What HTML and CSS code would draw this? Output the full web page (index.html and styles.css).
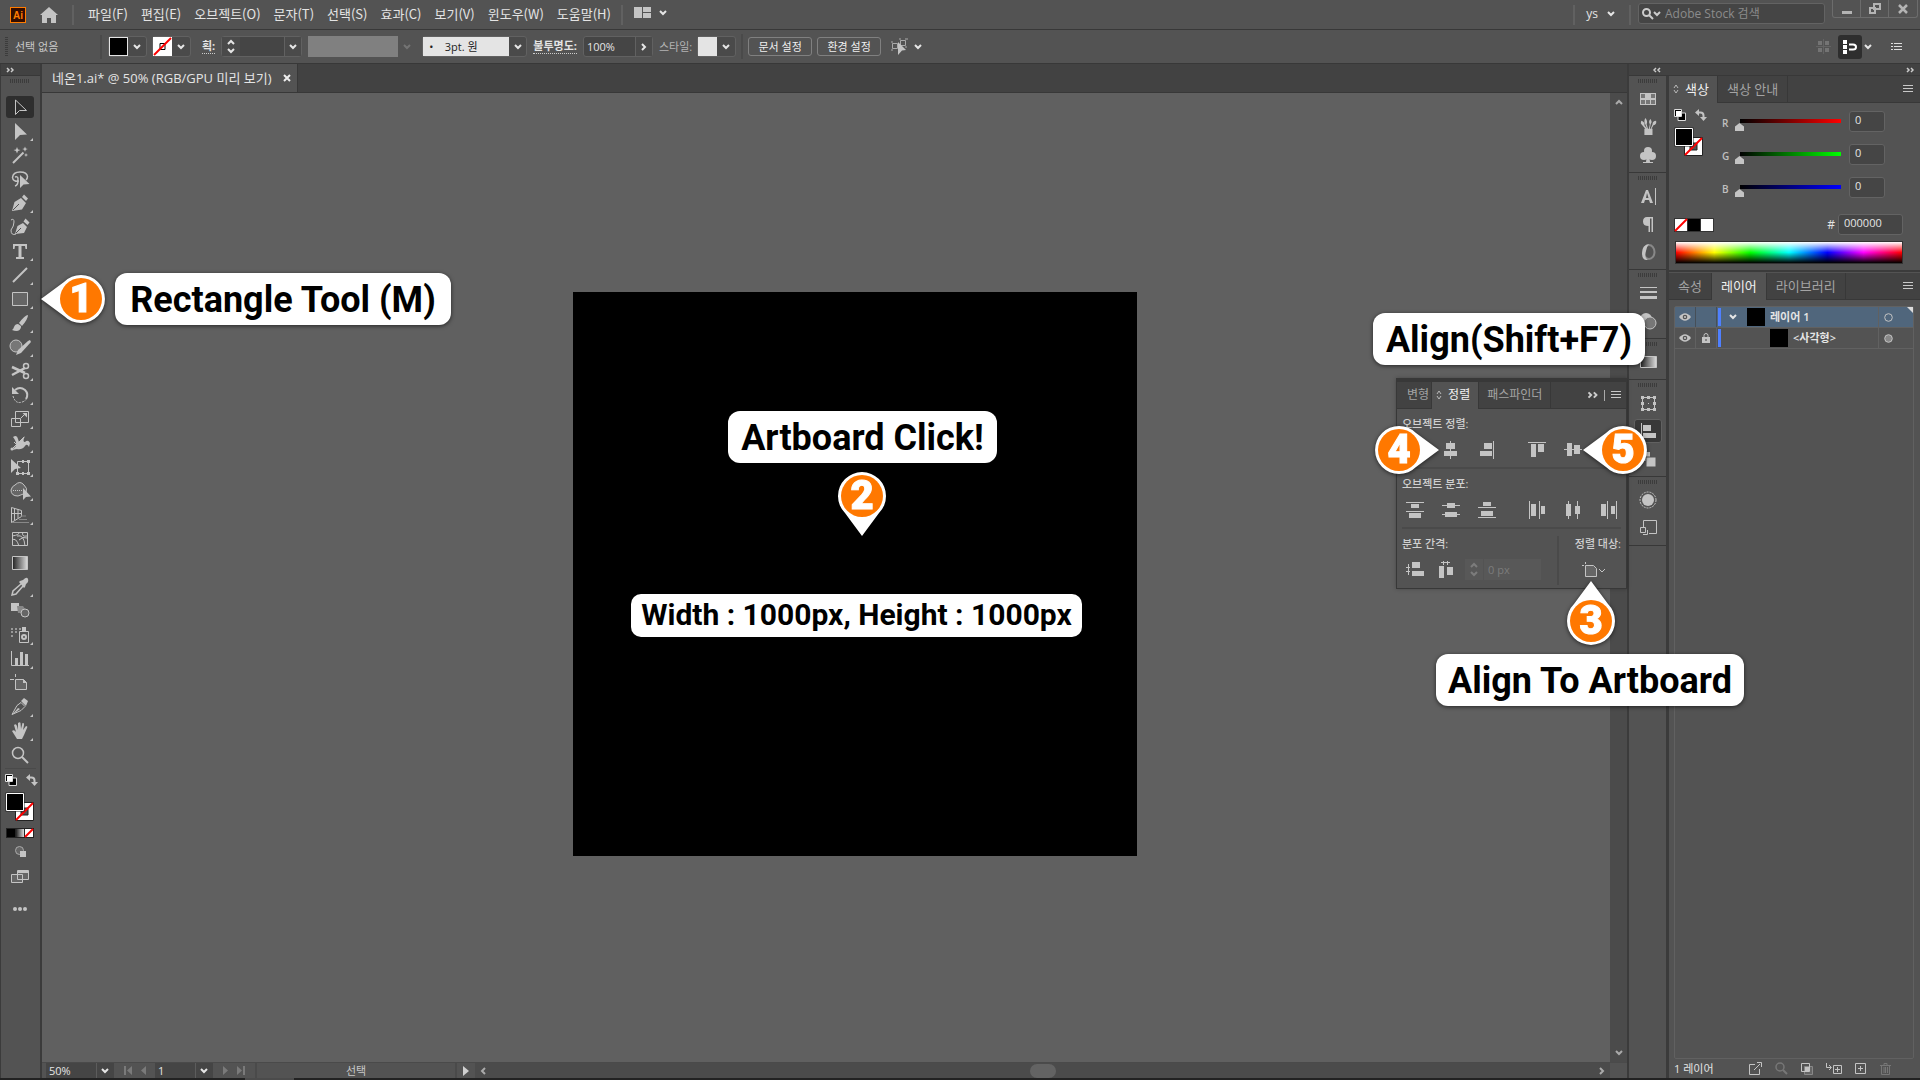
FILE: index.html
```html
<!DOCTYPE html>
<html lang="ko">
<head>
<meta charset="utf-8">
<title>네온1.ai</title>
<link rel="stylesheet" href="styles.css">
</head>
<body>
<svg class="sprite" aria-hidden="true">
  <symbol id="chev" viewBox="0 0 8 6"><path d="M1 1l3 3 3-3" fill="none" stroke="currentColor" stroke-width="2"/></symbol>
  <symbol id="menu" viewBox="0 0 10 8"><path d="M0 .5h10M0 3.5h10M0 6.5h10" stroke="currentColor"/></symbol>
  <symbol id="sort" viewBox="0 0 6 10"><path d="M1 4l2-3 2 3M1 6l2 3 2-3" fill="none" stroke="currentColor"/></symbol>
  <symbol id="dbl" viewBox="0 0 8 6"><path d="M1 1l2 2-2 2M5 1l2 2-2 2" fill="none" stroke="currentColor" stroke-width="1.5"/></symbol>
  <symbol id="default" viewBox="0 0 12 12"><path d="M4 4h7.500v7.500H4z" fill="#000" stroke="#ddd"/><path d="M.5.5h7v7h-7z" fill="#000" stroke="#ddd"/><path d="M2 2h5v5H2z" fill="#fff"/></symbol>
  <symbol id="swap" viewBox="0 0 12 12"><path d="M3 3.500h2.500q3 0 3 3V9" fill="none" stroke="#c4c4c4" stroke-width="2"/><path d="M0 3.500L4 0v7zM5 8h7l-3.500 4z" fill="#c4c4c4"/></symbol>
  <symbol id="fillstroke" viewBox="0 0 30 30"><path d="M10.500 10.500h18v18h-18z" fill="#fff" stroke="#222"/><path d="M16 16h7v7h-7z" fill="#535353" stroke="#222"/><path d="M11 28L28 11" stroke="#f00" stroke-width="2"/><path d="M.5.5h19v19H.5z" fill="#222"/><path d="M1.500 1.500h17v17h-17z" fill="#000" stroke="#fff"/></symbol>
  <symbol id="eye" viewBox="0 0 12 8"><path d="M0 4q6-7.500 12 0-6 7.500-12 0z" fill="#c4c4c4"/><circle cx="6" cy="4" r="2.300" fill="#535353"/><circle cx="6" cy="4" r="1.100" fill="#c4c4c4"/></symbol>
  <symbol id="pin" viewBox="-48 -48 96 96"><path d="M-40 0L-17-17A24 24 0 1 1-17 17z" fill="#fff"/><circle r="21" fill="#ff7800"/></symbol>
  <linearGradient id="ramp"><stop stop-color="#222"/><stop offset="1" stop-color="#ddd"/></linearGradient>
</svg>

<div class="app">
  <header class="menubar">
    <svg class="ai" viewBox="0 0 16 16"><rect x=".5" y=".5" width="15" height="15" fill="#330d00" stroke="#ff7c00"/><text x="8" y="12" text-anchor="middle" fill="#ff7c00">Ai</text></svg>
    <svg class="home" viewBox="0 0 18 16"><path d="M9 0l9 8h-2v8h-5v-5H7v5H2V8H0z" fill="#c4c4c4"/></svg>
    <nav class="menus">
      <a href="#">파일(F)</a><a href="#">편집(E)</a><a href="#">오브젝트(O)</a><a href="#">문자(T)</a><a href="#">선택(S)</a><a href="#">효과(C)</a><a href="#">보기(V)</a><a href="#">윈도우(W)</a><a href="#">도움말(H)</a>
    </nav>
    <button class="arrange" aria-label="문서 정돈"><svg width="17" height="11" viewBox="0 0 17 11"><path d="M0 0h8v11H0zM9 0h8v5H9zM9 6h8v5H9z" fill="#c4c4c4"/></svg><svg class="chev"><use href="#chev"/></svg></button>
    <button class="user">ys<svg class="chev"><use href="#chev"/></svg></button>
    <label class="search"><svg width="19" height="12" viewBox="0 0 19 12"><circle cx="4.500" cy="4.500" r="3.500" fill="none" stroke="#ccc" stroke-width="2"/><path d="M7 7l4 4M12 4l3 3 3-3" fill="none" stroke="#ccc" stroke-width="2"/></svg><input type="text" placeholder="Adobe Stock 검색" aria-label="Adobe Stock 검색"></label>
    <div class="win">
      <button aria-label="최소화"><svg width="12" height="12" viewBox="0 0 12 12"><path d="M1 8h10v3H1z" fill="#b4b4b4"/></svg></button>
      <button aria-label="복원"><svg width="12" height="12" viewBox="0 0 12 12"><path d="M5 1h6v5H5zM1 5h5v5H1z" fill="#535353" stroke="#b4b4b4" stroke-width="2"/></svg></button>
      <button aria-label="닫기"><svg width="12" height="12" viewBox="0 0 12 12"><path d="M2 2l8 8M10 2l-8 8" stroke="#b4b4b4" stroke-width="2.500"/></svg></button>
    </div>
  </header>

  <div class="controls">
    <i class="vgrip"></i>
    <span class="selection">선택 없음</span>
    <button class="swatch-btn" aria-label="칠"><i class="sw black"></i><svg class="chev"><use href="#chev"/></svg></button>
    <button class="swatch-btn" aria-label="획 색상"><svg class="sw" viewBox="0 0 19 19"><path d="M0 0h19v19H0z" fill="#fff"/><path d="M7 6.500h5v6H7z" fill="none" stroke="#000"/><path d="M1 18L18 1" stroke="#f00" stroke-width="2"/></svg><svg class="chev"><use href="#chev"/></svg></button>
    <label class="strong dotted" for="sw">획:</label>
    <span class="combo stroke-w"><button class="step" aria-label="증감"><svg class="chev flip"><use href="#chev"/></svg><svg class="chev"><use href="#chev"/></svg></button><input id="sw" type="text"><button class="drop" aria-label="획 두께 목록"><svg class="chev"><use href="#chev"/></svg></button></span>
    <span class="profile"><i></i><svg class="chev"><use href="#chev"/></svg></span>
    <span class="combo brush"><select aria-label="브러쉬"><option>•&nbsp;&nbsp;&nbsp;&nbsp;3pt. 원</option></select><svg class="chev"><use href="#chev"/></svg></span>
    <label class="strong dotted" for="op">불투명도:</label>
    <span class="combo opacity"><input id="op" type="text" value="100%"><button class="drop" aria-label="불투명도"><svg class="chev right"><use href="#chev"/></svg></button></span>
    <span class="dim">스타일:</span>
    <button class="swatch-btn" aria-label="스타일"><i class="sw light"></i><svg class="chev"><use href="#chev"/></svg></button>
    <i class="rule"></i>
    <button class="outline">문서 설정</button>
    <button class="outline">환경 설정</button>
    <button class="similar" aria-label="유사 오브젝트 선택"><svg width="17" height="17" viewBox="0 0 17 17"><path d="M1.500 5.500h5v5h-5zM9.500 2.500h5v5h-5zM0 4h2M0 12h2M8 1h2M14 1h3M14 9h2" fill="none" stroke="#aaa"/><path d="M7 4l8 8-4 .5L7 17z" fill="#c4c4c4"/></svg><svg class="chev"><use href="#chev"/></svg></button>
    <div class="snap">
      <svg width="15" height="15" viewBox="0 0 15 15"><path d="M7 0h1v15H7zM0 7h15v1H0z" fill="#646464"/><path d="M2 2h4v4H2zM9 2h4v4H9zM2 9h4v4H2zM9 9h4v4H9z" fill="#747474"/></svg>
      <button class="snap-on" aria-label="스냅"><svg width="16" height="14" viewBox="0 0 16 14"><path d="M1 0h4v4H1zM1 5h4v4H1zM1 10h4v4H1z" fill="#fff"/><path d="M7 4.500h4q3 0 3 2.500t-3 2.500H7" fill="none" stroke="#fff" stroke-width="2"/></svg></button>
      <svg class="chev"><use href="#chev"/></svg>
      <svg class="list-ico" width="11" height="9" viewBox="0 0 11 9"><path d="M0 1.500h2M3 1.500h8M0 4.500h2M3 4.500h8M0 7.500h2M3 7.500h8" stroke="#ddd"/></svg>
    </div>
  </div>

  <main class="work">
    <aside class="tools">
      <div class="strip"><svg class="dbl"><use href="#dbl"/></svg></div>
      <i class="grip"></i>
      <div class="toolset">
        <button class="on" aria-label="선택"><svg viewBox="0 0 28 22"><path class="l" d="M9.500 4v14.500l4-4h7z"/></svg></button>
        <button class="more" aria-label="직접 선택"><svg viewBox="0 0 28 22"><path class="f" d="M9 3v17l5-5 7-.5z"/></svg></button>
        <button aria-label="자동 선택"><svg viewBox="0 0 28 22"><path d="M7 19L17.500 8.500" class="w"/><path class="f" d="M11 3l1 2.500L14.500 6 12 7l-1 2.500L10 7 7.500 6 10 5.500zM19 2.500l.8 2 2 .5-2 .8-.8 2-.8-2-2-.8 2-.5zM20 9l.6 1.500 1.500.5-1.500.6-.6 1.500-.6-1.500L18 11l1.400-.5z"/></svg></button>
        <button aria-label="올가미"><svg viewBox="0 0 28 22"><path class="w thin" d="M13 13q-6 1-6.500-3.500Q7 4 14 4t7.500 4.500q0 2-1.500 3.500M9 9q3-1 3 2t-3 2M12 13q0 4-3 5"/><path class="f" d="M14 7v13l3.500-3.500 6-.5z"/></svg></button>
        <button class="more" aria-label="펜"><svg viewBox="0 0 28 22"><path class="f" d="M6 19l2.500-9L15 6l5 5-4 6.500zM16 5l2-2.500 4 4L20 9z"/><path d="M7 18l6-6" stroke="#535353"/></svg></button>
        <button aria-label="곡률"><svg viewBox="0 0 28 22"><path class="f" d="M9 18l2.500-8L17 7l4 4-3 6zM17.500 5.500l2-3 4 4L21.500 9z"/><path class="l" d="M5 4q3-2 3 2t-3 8q0 6 5 4"/><path d="M10 17l5-5" stroke="#535353"/></svg></button>
        <button class="more" aria-label="문자"><svg viewBox="0 0 28 22"><path class="f" d="M7 4h14v5h-1.500L19 6h-3.500v11H18v2h-8v-2h2.500V6H9l-.5 3H7z"/></svg></button>
        <button class="more" aria-label="선분"><svg viewBox="0 0 28 22"><path class="w" d="M7 18L21 4"/></svg></button>
        <button class="more" aria-label="사각형"><svg viewBox="0 0 28 22"><path d="M6.500 4.500h15v13h-15z" fill="#666" class="s"/></svg></button>
        <button class="more" aria-label="브러쉬"><svg viewBox="0 0 28 22"><path class="f" d="M22 3q-3 0-9 8l3 3q6-7 6-11zM12 12q-3 0-4 3-1 3-2 3 5 2 7.500 0 2-2 1.500-4z"/></svg></button>
        <button class="more" aria-label="모양"><svg viewBox="0 0 28 22"><circle cx="10" cy="10" r="6" fill="#777" class="s"/><path class="f" d="M24 4l1 2L15 17l-5 2 2-5L22 5z"/></svg></button>
        <button class="more" aria-label="가위"><svg viewBox="0 0 28 22"><path d="M6 7l13 6M6 15l13-7" class="t"/><circle cx="20" cy="6" r="2.500" class="w thin"/><circle cx="20" cy="16" r="2.500" class="w thin"/></svg></button>
        <button class="more" aria-label="회전"><svg viewBox="0 0 28 22"><path class="w" d="M9 6q5-4 10 0 4 4 1 9"/><path class="f" d="M6 3v7h7z"/><path class="l" stroke-dasharray="2 1" d="M7 12q2 7 7 6.500 4-.5 6-3"/></svg></button>
        <button class="more" aria-label="크기 조절"><svg viewBox="0 0 28 22"><path class="l" d="M9.500 3.500h13v11h-13zM5.500 10.500h9v8h-9zM15 10l5-5"/><path class="f" d="M16.500 5H21v4.500z"/></svg></button>
        <button class="more" aria-label="폭"><svg viewBox="0 0 28 22"><path class="f" d="M7 5q4-3 5 2l1 3 6-6q-3 6 0 6 3-3 5 1l-1 4q-2-4-4-1-3 4-8 3l-5 1 4-4q1-4-3-9z"/><path class="l" d="M6 17L18 5M8 10l6 6"/><circle class="f" cx="6" cy="17" r="1.500"/></svg></button>
        <button class="more" aria-label="자유 변형"><svg viewBox="0 0 28 22"><path class="l" d="M11.500 5.500h11v12h-11z"/><path class="f" d="M5 3v14l4-4 6-1zM21 4h3v3h-3zM21 16h3v3h-3zM10 16h3v3h-3zM16 4h2v3h-2zM16 16h2v3h-2z"/></svg></button>
        <button class="more" aria-label="도형 구성"><svg viewBox="0 0 28 22"><path d="M9 5q5-5 9 0 4 3 2 8l-8 3Q5 16 5 10q1-4 4-5z" fill="#666" class="s"/><path class="l" stroke-dasharray="1 1" d="M7 10.500h10"/><path class="f" d="M17 8v12l3-3 5-.5z"/></svg></button>
        <button class="more" aria-label="원근감"><svg viewBox="0 0 28 22"><path class="l" d="M5.500 3.500v15l10-6V6.500zM8.500 4v12M12 5v9M5 9.500h10"/><path d="M15 12h5M13 15.500h8M6 18.500h17" stroke="#888"/></svg></button>
        <button aria-label="망"><svg viewBox="0 0 28 22"><path class="l" d="M6.500 4.500h15v13h-15zM6 8q8-1 7-4M13 18Q10 9 6 12M21 8q-6 1-4-4M11 8q7-2 8 10M13 12q4-4 8-2"/></svg></button>
        <button aria-label="그라디언트"><svg viewBox="0 0 28 22"><path d="M6.500 4.500h15v13h-15z" fill="url(#ramp)" class="s"/></svg></button>
        <button class="more" aria-label="스포이드"><svg viewBox="0 0 28 22"><path class="w thin" d="M15 8l-8 7-1 4 4-1 7-8"/><path class="f" d="M14 5l3-1q4-4 5-1t-2 5l-1 3-1 1-5-6z"/></svg></button>
        <button aria-label="블렌드"><svg viewBox="0 0 28 22"><path class="f" d="M5 3h8v8H5z"/><path d="M11 6h6l2 3v4h-7z" fill="#888"/><circle cx="19" cy="13" r="4" fill="#666" class="s"/></svg></button>
        <button class="more" aria-label="심볼 분무기"><svg viewBox="0 0 28 22"><path d="M5 5h2M9 5h2M13 5h2M5 8h2M9 8h2M5 12h2" stroke="#999" stroke-width="2"/><path class="l" d="M13.500 7.500h9v11h-9z"/><path class="f" d="M16 3h4v4h-4z"/><circle class="w" cx="18" cy="13" r="2"/></svg></button>
        <button class="more" aria-label="그래프"><svg viewBox="0 0 28 22"><path class="l" d="M5.500 3v14.500H23"/><path class="f" d="M9 10h3v7H9zM14 4h3v13h-3zM19 6h3v11h-3z"/></svg></button>
        <button aria-label="대지"><svg viewBox="0 0 28 22"><path d="M9.500 7.500h8l3 3v7h-11z" fill="#666" class="s"/><path class="l" d="M9.500 2v3M4 7.500h4"/><path class="f" d="M17 7l4 4h-4z"/></svg></button>
        <button class="more" aria-label="분할"><svg viewBox="0 0 28 22"><path class="l" d="M6 18.500l5-9 4-3 4 4-4 4z"/><path class="f" d="M15 5l3-3 4 3-2 5zM6 19l8-6-2-1z"/></svg></button>
        <button class="more" aria-label="손"><svg viewBox="0 0 28 22"><path class="f" d="M11 19l-5-8q2-2 4 1L8 5q2-2 3 1l1 4V3q2-1.500 2.500 0l.5 6 1.500-6q2-.5 1.500 2l-1 5 3-4q2 0 1 2l-3 7-2 4z"/></svg></button>
        <button aria-label="돋보기"><svg viewBox="0 0 28 22"><circle class="w thin" cx="12" cy="9" r="5.500"/><path d="M16 13l6 6" class="w"/></svg></button>
      </div>
      <div class="tool-colors">
        <div class="row"><svg width="12" height="12"><use href="#default"/></svg><svg width="12" height="12"><use href="#swap"/></svg></div>
        <svg width="30" height="30"><use href="#fillstroke"/></svg>
        <svg class="modes" width="28" height="10" viewBox="0 0 28 10"><path d="M0 0h28v10H0z" fill="#222"/><path d="M1 1h8v8H1z"/><path d="M10 1h8v8h-8z" fill="url(#ramp)"/><path d="M19 1h8v8h-8z" fill="#fff"/><path d="M19 9l8-8" stroke="#f00" stroke-width="2"/></svg>
      </div>
      <div class="tool-end">
        <svg width="11" height="11" viewBox="0 0 11 11"><circle cx="4.500" cy="4.500" r="4" fill="#666" stroke="#aaa"/><path d="M5 5h6v6H5z" fill="#c4c4c4"/></svg>
        <svg width="18" height="13" viewBox="0 0 18 13"><path d="M.5 4.500h11v8H.5zM6.500.5h11v9h-11z" fill="#666" stroke="#c4c4c4"/><path d="M6 1h12v2H6z" fill="#c4c4c4"/></svg>
        <svg width="14" height="4" viewBox="0 0 14 4"><circle cx="2" cy="2" r="2" fill="#c4c4c4"/><circle cx="7" cy="2" r="2" fill="#c4c4c4"/><circle cx="12" cy="2" r="2" fill="#c4c4c4"/></svg>
      </div>
    </aside>

    <section class="doc">
      <div class="doctabs"><div class="doctab"><span>네온1.ai* @ 50% (RGB/GPU 미리 보기)</span><button aria-label="닫기"><svg width="6" height="6" viewBox="0 0 6 6"><path d="M0 0l6 6M6 0L0 6" stroke="#eee" stroke-width="2"/></svg></button></div></div>
      <div class="stage">
        <div class="canvas"></div>
        <div class="vscroll"><svg class="chev flip"><use href="#chev"/></svg><svg class="chev"><use href="#chev"/></svg></div>

        <div class="artboard">
          <p class="note click">Artboard Click!</p>
          <div class="pin down p2"><svg><use href="#pin"/></svg><b>2</b></div>
          <p class="note small size">Width : 1000px, Height : 1000px</p>
        </div>

        <section class="align">
          <div class="tabs">
            <button class="clip">변형</button>
            <button class="on"><svg class="sort"><use href="#sort"/></svg>정렬</button>
            <button>패스파인더</button>
            <span class="tabs-end"><svg width="11" height="8" viewBox="0 0 8 6"><use href="#dbl"/></svg><i></i><svg class="menu"><use href="#menu"/></svg></span>
          </div>
          <div class="group">
            <h3>오브젝트 정렬:</h3>
            <div class="six">
              <button aria-label="왼쪽 정렬"><svg viewBox="0 0 18 18"><path d="M2 0h1v18H2zM4 3h8v5H4zM4 10h12v5H4z"/></svg></button>
              <button aria-label="가로 가운데 정렬"><svg viewBox="0 0 18 18"><path d="M8 0h1v18H8zM4 2h9v6H4zM2 10h13v5H2z"/></svg></button>
              <button aria-label="오른쪽 정렬"><svg viewBox="0 0 18 18"><path d="M15 0h1v18h-1zM6 2h8v6H6zM2 10h12v5H2z"/></svg></button>
              <button aria-label="위쪽 정렬"><svg viewBox="0 0 18 18"><path d="M0 1h18v1H0zM3 3h5v13H3zM10 3h6v8h-6z"/></svg></button>
              <button aria-label="세로 가운데 정렬"><svg viewBox="0 0 18 18"><path d="M0 8h18v1H0zM3 2h5v13H3zM10 4h6v9h-6z"/></svg></button>
              <button aria-label="아래쪽 정렬"><svg viewBox="0 0 18 18"><path d="M0 16h18v1H0zM3 2h5v13H3zM10 7h6v8h-6z"/></svg></button>
            </div>
          </div>
          <div class="group">
            <h3>오브젝트 분포:</h3>
            <div class="six">
              <button aria-label="위쪽 분포"><svg viewBox="0 0 18 18"><path d="M0 1h18v1H0zM5 3h8v4H5zM0 10h18v1H0zM3 12h12v5H3z"/></svg></button>
              <button aria-label="세로 분포"><svg viewBox="0 0 18 18"><path d="M0 4h18v1H0zM5 2h8v5H5zM0 13h18v1H0zM3 11h12v5H3z"/></svg></button>
              <button aria-label="아래쪽 분포"><svg viewBox="0 0 18 18"><path d="M5 1h8v4H5zM0 6h18v1H0zM3 10h12v5H3zM0 16h18v1H0z"/></svg></button>
              <button aria-label="왼쪽 분포"><svg viewBox="0 0 18 18"><path d="M1 0h1v18H1zM3 3h5v12H3zM11 0h1v18h-1zM13 5h4v8h-4z"/></svg></button>
              <button aria-label="가로 분포"><svg viewBox="0 0 18 18"><path d="M4 0h1v18H4zM2 3h5v12H2zM13 0h1v18h-1zM11 5h5v8h-5z"/></svg></button>
              <button aria-label="오른쪽 분포"><svg viewBox="0 0 18 18"><path d="M1 3h5v12H1zM7 0h1v18H7zM11 5h4v8h-4zM16 0h1v18h-1z"/></svg></button>
            </div>
          </div>
          <div class="last">
            <div class="spacing">
              <h3>분포 간격:</h3>
              <div class="spacing-row">
                <button aria-label="세로 간격"><svg viewBox="0 0 18 18"><path d="M6 1h8v6H6zM6 10h12v5H6zM0 6h4v1H0zM0 10h4v1H0zM2 3h1v11H2z"/></svg></button>
                <button aria-label="가로 간격"><svg viewBox="0 0 18 18"><path d="M2 5h5v12H2zM10 6h6v8h-6zM4 1h9v1H4zM6 0h1v4H6zM10 0h1v4h-1z"/></svg></button>
                <span class="px"><span class="step"><svg class="chev flip"><use href="#chev"/></svg><svg class="chev"><use href="#chev"/></svg></span><input type="text" value="0 px" aria-label="간격" disabled></span>
              </div>
            </div>
            <div class="target">
              <h3>정렬 대상:</h3>
              <button aria-label="대지에 정렬"><svg width="24" height="16" viewBox="0 0 24 16"><path d="M3.500 3.500h8l3 3v8h-11z" fill="#666" stroke="#c4c4c4"/><path d="M3.500 0v2M0 3.500h2M17 7l3 3 3-3" fill="none" stroke="#c4c4c4"/></svg></button>
            </div>
          </div>
        </section>

        <p class="note rect">Rectangle Tool (M)</p>
        <div class="pin p1"><svg><use href="#pin"/></svg><b>1</b></div>
        <p class="note shift">Align(Shift+F7)</p>
        <div class="pin east p4"><svg><use href="#pin"/></svg><b>4</b></div>
        <div class="pin p5"><svg><use href="#pin"/></svg><b>5</b></div>
        <div class="pin north p3"><svg><use href="#pin"/></svg><b>3</b></div>
        <p class="note toart">Align To Artboard</p>
      </div>
      <footer class="status">
        <span class="sel zoom"><select aria-label="확대/축소"><option>50%</option></select><svg class="chev"><use href="#chev"/></svg></span>
        <span class="nav"><svg width="8" height="9" viewBox="0 0 8 9"><path d="M0 0h2v9H0zM8 0v9L3 4.500z"/></svg><svg width="5" height="9" viewBox="0 0 5 9"><path d="M5 0v9L0 4.500z"/></svg></span>
        <span class="sel board"><select aria-label="대지"><option>1</option></select><svg class="chev"><use href="#chev"/></svg></span>
        <span class="nav"><svg width="5" height="9" viewBox="0 0 5 9"><path d="M0 0v9l5-4.500z"/></svg><svg width="8" height="9" viewBox="0 0 8 9"><path d="M6 0h2v9H6zM0 0v9l5-4.500z"/></svg></span>
        <span class="mode">선택</span>
        <button class="play" aria-label="상태 표시"><svg width="6" height="10" viewBox="0 0 6 10"><path d="M0 0v10l6-5z" fill="#d0d0d0"/></svg></button>
        <div class="hscroll"><svg class="chev left"><use href="#chev"/></svg><i></i><svg class="chev right"><use href="#chev"/></svg></div>
        <span class="corner"></span>
      </footer>
    </section>

    <aside class="side">
      <div class="strip"><svg class="dbl flip"><use href="#dbl"/></svg><svg class="dbl"><use href="#dbl"/></svg></div>
      <div class="side-body">
        <div class="dock">
          <div class="dgroup"><i class="grip"></i>
            <button aria-label="견본"><svg viewBox="0 0 18 18"><path d="M1 3h16v12H1z" fill="#c4c4c4"/><path d="M2 4h4v4H2zM12 4h4v4h-4zM2 10h4v4H2zM7 10h4v4H7zM12 10h4v4h-4z" fill="#777"/></svg></button>
            <button aria-label="브러쉬"><svg viewBox="0 0 18 20"><path class="f" d="M5 12h9v7H5zM8 12L6 7q-2-3 0-7 3 3 1.500 7L9 12zM10 12l1-5q-2-4 1-6 2 3 0 6l-1 5zM6 12L1 6q0-3 1-3 4 2 3 5l3 4zM12 12l2-5q0-4 4-4 1 4-3 5l-2 4z"/></svg></button>
            <button aria-label="심볼"><svg viewBox="0 0 18 18"><circle class="f" cx="9" cy="5" r="4"/><circle class="f" cx="5" cy="10" r="4"/><circle class="f" cx="13" cy="10" r="4"/><path class="f" d="M8 8h2l1 8h3v1H4v-1h3z"/></svg></button></div>
          <div class="dgroup"><i class="grip"></i>
            <button aria-label="문자"><svg viewBox="0 0 18 18"><path class="f" fill-rule="evenodd" d="M2 16L7 3h2l5 13h-3l-1-3H6l-1 3zM7 11h2.500L8 6zM16 1h1v17h-1z"/></svg></button>
            <button aria-label="단락"><svg viewBox="0 0 18 18"><path class="f" d="M14 2v15h-1.500V3.500H11V17H9.500v-6Q4 11 4 6.500T8 2z"/></svg></button>
            <button aria-label="OpenType"><svg viewBox="0 0 18 18"><ellipse cx="10" cy="9" rx="5.500" ry="7" fill="none" stroke="#888" stroke-width="2"/><path class="f" d="M10 1Q3 2 3 10t6 7q-4-2-2-9 1-5 3-7z"/></svg></button></div>
          <div class="dgroup"><i class="grip"></i>
            <button aria-label="획"><svg viewBox="0 0 18 18"><path class="f" d="M1 3h17v1H1zM1 7h17v2H1zM1 12h17v3H1z"/></svg></button>
            <button aria-label="투명도"><svg viewBox="0 0 18 18"><circle cx="7" cy="7" r="6" fill="#c4c4c4"/><circle cx="11" cy="11" r="6" fill="#777" stroke="#c4c4c4"/></svg></button></div>
          <div class="dgroup"><i class="grip"></i>
            <button aria-label="그라디언트"><svg viewBox="0 0 18 18"><path d="M1.500 3.500h16v11h-16z" fill="url(#ramp)" stroke="#c4c4c4"/></svg></button></div>
          <div class="dgroup"><i class="grip"></i>
            <button aria-label="변형"><svg viewBox="0 0 18 18"><path class="l" d="M3.500 3.500h12v12h-12z"/><path class="f" d="M2 2h3v3H2zM8 2h3v3H8zM14 2h3v3h-3zM2 8h3v3H2zM14 8h3v3h-3zM2 14h3v3H2zM8 14h3v3H8zM14 14h3v3h-3zM9 9h1v1H9z"/></svg></button>
            <button class="on" aria-label="정렬"><svg viewBox="0 0 18 18"><path class="f" d="M2 1h1v17H2zM4 3h8v6H4zM4 11h13v5H4z"/></svg></button>
            <button aria-label="패스파인더"><svg viewBox="0 0 18 18"><path class="f" d="M2 2h9v9H2z"/><path d="M7 7h10v10H7z" fill="#c4c4c4" stroke="#535353"/></svg></button></div>
          <div class="dgroup"><i class="grip"></i>
            <button aria-label="모양"><svg viewBox="0 0 18 18"><circle class="f" cx="9" cy="9" r="6"/><circle class="l" cx="9" cy="9" r="8" stroke-dasharray="2 1"/></svg></button>
            <button aria-label="에셋"><svg viewBox="0 0 18 18"><path class="l" d="M4.500 9V1.500h13v13H10M1.500 8.500h5v5h-5zM4 15.500h4.500V11"/></svg></button></div>
        </div>

        <div class="panels">
          <section class="panel color">
            <div class="tabs"><button class="on"><svg class="sort"><use href="#sort"/></svg>색상</button><button>색상 안내</button><span class="tabs-end"><svg class="menu"><use href="#menu"/></svg></span></div>
            <div class="mixer">
              <div class="mix-sw"><div class="row"><svg width="12" height="12"><use href="#default"/></svg><svg width="12" height="12"><use href="#swap"/></svg></div><svg width="30" height="30"><use href="#fillstroke"/></svg></div>
              <div class="sliders">
                <div class="slide r"><label for="r">R</label><input id="r" type="range" min="0" max="255" value="0"><input type="text" value="0" aria-label="R 값"></div>
                <div class="slide g"><label for="g">G</label><input id="g" type="range" min="0" max="255" value="0"><input type="text" value="0" aria-label="G 값"></div>
                <div class="slide b"><label for="b">B</label><input id="b" type="range" min="0" max="255" value="0"><input type="text" value="0" aria-label="B 값"></div>
              </div>
            </div>
            <div class="hexrow"><svg width="40" height="14" viewBox="0 0 40 14"><path d="M0 0h40v14H0z" fill="#333"/><path d="M1 1h12v12H1zM27 1h12v12H27z" fill="#fff"/><path d="M14 1h12v12H14z"/><path d="M1 13L13 1" stroke="#f00" stroke-width="2"/></svg><label for="hex">#</label><input id="hex" type="text" value="000000"></div>
            <div class="spectrum"></div>
          </section>

          <section class="panel layers">
            <div class="tabs"><button>속성</button><button class="on">레이어</button><button>라이브러리</button><span class="tabs-end"><svg class="menu"><use href="#menu"/></svg></span></div>
            <div class="list">
              <div class="layer cur"><span class="c"><svg width="12" height="8"><use href="#eye"/></svg></span><span class="c"></span><i class="bar"></i><svg class="chev"><use href="#chev"/></svg><i class="thumb"></i><span class="name">레이어 1</span><span class="tgt"><svg width="9" height="9" viewBox="0 0 9 9"><circle cx="4.500" cy="4.500" r="3.800" fill="none" stroke="#c4c4c4"/></svg></span></div>
              <div class="layer kid"><span class="c"><svg width="12" height="8"><use href="#eye"/></svg></span><span class="c"><svg width="8" height="10" viewBox="0 0 8 10"><path d="M2 4V2.500q0-2 2-2t2 2V4" fill="none" stroke="#c4c4c4"/><path d="M0 4h8v6H0z" fill="#c4c4c4"/><path d="M3.500 6h1v2h-1z" fill="#444"/></svg></span><i class="bar"></i><i class="thumb"></i><span class="name">&lt;사각형&gt;</span><span class="tgt"><svg width="9" height="9" viewBox="0 0 9 9"><circle cx="4.500" cy="4.500" r="3.800" fill="#888" stroke="#c4c4c4"/></svg></span></div>
            </div>
            <footer class="lfoot"><span>1 레이어</span>
              <div class="lbtns">
                <button aria-label="내보내기"><svg width="13" height="13" viewBox="0 0 13 13"><path d="M6 2.500H.5v10h10V7M5 8l6-6M8 .5h4.500V5" class="l"/></svg></button>
                <button aria-label="찾기"><svg width="13" height="13" viewBox="0 0 13 13"><circle cx="5" cy="5" r="4" fill="none" stroke="#777" stroke-width="1.500"/><path d="M8 8l4 4" stroke="#777" stroke-width="2"/></svg></button>
                <button aria-label="마스크"><svg width="12" height="12" viewBox="0 0 12 12"><path d="M3.500 3.500h8v8h-8z" fill="#666" stroke="#888"/><path class="l" d="M.5.5h8v8h-8z"/><path class="f" d="M4 4h4v4H4z"/></svg></button>
                <button aria-label="하위 레이어"><svg width="16" height="12" viewBox="0 0 16 12"><path class="l" d="M.5 0v4.500H5M3 2l2.500 2.500L3 7M7.500 2.500h8v8h-8zM9 6.500h5M11.500 4v5"/></svg></button>
                <button aria-label="새 레이어"><svg width="12" height="12" viewBox="0 0 12 12"><path class="l" d="M.5.5h10v10H.5zM3 5.500h5M5.500 3v5"/></svg></button>
                <button aria-label="삭제"><svg width="12" height="12" viewBox="0 0 12 12"><path d="M0 2.500h11M4 2V.5h3V2M1.500 3v8.500h8V3M4 4v6M5.500 4v6M7.500 4v6" fill="none" stroke="#777"/></svg></button>
              </div>
            </footer>
          </section>
        </div>
      </div>
    </aside>
  </main>
  <div class="taskline"><i></i></div>
</div>
</body>
</html>
```

FILE: styles.css
```css
* { box-sizing: border-box; }
body, p, h3 { margin: 0; }
body { background: #535353; color: #e4e4e4; font: 13px/16px "Open Sans", "Noto Sans CJK KR", sans-serif; }
button, input, select { margin: 0; padding: 0; border: 0; background: none; color: inherit; font: inherit; outline: 0; }
select { appearance: none; }
a { color: inherit; text-decoration: none; }
svg { display: block; flex: none; overflow: visible; }
i { display: block; flex: none; }
.sprite { position: absolute; width: 0; height: 0; }
.chev { width: 8px; height: 6px; color: #e6e6e6; }
.left { transform: rotate(90deg); }
.right { transform: rotate(-90deg); }
.flip { transform: rotate(180deg); }
.dbl { width: 8px; height: 6px; color: #ccc; }
.menu { width: 10px; height: 8px; color: #c8c8c8; }
.sort { width: 6px; height: 10px; color: #bbb; }
.l { fill: none; stroke: #c4c4c4; }
.s { stroke: #c4c4c4; }
.w { fill: none; stroke: #c4c4c4; stroke-width: 2; }
.thin { stroke-width: 1.5; }
.t { fill: none; stroke: #c4c4c4; stroke-width: 2.5; }
.f { fill: #c4c4c4; }
.row { display: flex; }

.app { display: flex; flex-direction: column; height: 100vh; overflow: hidden; }

/* menu bar */
.menubar { display: flex; align-items: center; height: 30px; padding: 0 2px 0 10px; border-bottom: 1px solid #383838; }
.ai { width: 16px; height: 16px; }
.ai text { font: bold 10px "Liberation Sans", sans-serif; }
.home { width: 18px; height: 16px; margin: 0 14px; }
.menus { display: flex; gap: 13px; height: 20px; align-items: center; padding: 0 10px 2px 14px; border: solid #616161; border-width: 0 2px; font-family: "Noto Sans CJK KR", sans-serif; white-space: nowrap; }
.arrange { display: flex; align-items: center; gap: 8px; margin-left: 11px; padding-bottom: 4px; }
.user { display: flex; align-items: center; gap: 9px; height: 20px; margin-left: auto; padding: 0 14px 2px 11px; border: solid #616161; border-width: 0 2px; font-size: 12px; }
.search { display: flex; align-items: center; gap: 4px; width: 187px; height: 21px; margin: 0 7px 2px; padding: 0 3px; border: 1px solid #636363; border-radius: 3px; background: #454545; }
.search input { width: 150px; font-size: 12px; }
.search input::placeholder { color: #8c8c8c; opacity: 1; }
.win { display: flex; align-self: flex-start; height: 18px; border: 1px solid #6c6c6c; border-top: 0; border-radius: 0 0 3px 3px; }
.win button { display: grid; place-items: center; width: 28px; border-right: 1px solid #6c6c6c; }
.win button:last-child { border-right: 0; }

/* control bar */
.controls { display: flex; align-items: center; height: 34px; padding-left: 5px; border-bottom: 1px solid #383838; font-size: 11px; white-space: nowrap; }
.vgrip { width: 3px; height: 20px; margin-right: 7px; background: repeating-linear-gradient(#3c3c3c 0 1px, #535353 1px 2px); }
.selection { width: 87px; height: 24px; line-height: 24px; margin-right: 6px; border-right: 2px solid #4a4a4a; color: #c8c8c8; }
.swatch-btn { display: flex; align-items: center; gap: 5px; width: 39px; height: 21px; margin-right: 5px; border: 1px solid #616161; border-radius: 3px; background: #4a4a4a; }
.sw { width: 19px; height: 19px; }
.black { background: #000; border: 1px solid #e4e4e4; }
.light { background: #e4e4e4; }
.strong { font-weight: bold; }
.dotted { border-bottom: 1px dotted #ccc; }
.dim { color: #b4b4b4; margin-right: 5px; }
.controls > label { margin-left: 6px; line-height: 14px; }
.combo { display: flex; align-items: center; height: 21px; margin-left: 6px; border: 1px solid #616161; border-radius: 3px; background: #454545; }
.step { display: flex; flex-direction: column; justify-content: center; align-items: center; gap: 3px; width: 18px; height: 19px; background: #4a4a4a; }
.stroke-w input { width: 44px; }
.stroke-w { width: 81px; }
.drop { display: grid; place-items: center; width: 17px; height: 19px; background: #4a4a4a; border-left: 1px solid #616161; }
.profile { display: flex; align-items: center; gap: 5px; width: 108px; margin-left: 6px; }
.profile i { width: 90px; height: 21px; background: #808080; }
.profile .chev { color: #747474; }
.brush { gap: 5px; width: 105px; background: #4a4a4a; }
.brush select { width: 86px; height: 19px; padding-left: 6px; background: #e4e4e4; color: #222; }
.opacity { width: 70px; margin-right: 6px; }
.opacity input { width: 51px; padding-left: 3px; }
.rule { width: 2px; height: 25px; margin: 0 5px 0 0; background: #4a4a4a; }
.outline { width: 64px; height: 19px; margin-right: 5px; border: 1px solid #808080; border-radius: 3px; color: #f0f0f0; line-height: 15px; }
.similar { display: flex; align-items: center; gap: 6px; margin-left: 5px; }
.snap { display: flex; align-items: center; margin-left: auto; padding-right: 18px; }
.snap-on { display: grid; place-items: center; width: 24px; height: 24px; margin: 0 2px 0 7px; border-radius: 3px; background: #2e2e2e; }
.list-ico { margin-left: 19px; }

/* work area */
.work { display: flex; flex: 1; min-height: 0; }
.strip { display: flex; align-items: center; justify-content: space-between; height: 12px; background: #424242; border-bottom: 1px solid #383838; }
.grip { width: 19px; height: 4px; background: repeating-linear-gradient(90deg, #3c3c3c 0 1px, #535353 1px 2px); }

.tools { width: 42px; border: solid #3b3b3b; border-width: 0 2px 0 1px; }
.tools .strip { padding-left: 5px; }
.tools .grip { margin: 3px 0 0 9px; }
.toolset { display: grid; gap: 2px; padding: 13px 5px 2px; }
.toolset button { position: relative; width: 28px; height: 22px; }
.toolset svg { width: 28px; height: 22px; }
.toolset .on { background: #2e2e2e; border-radius: 3px; }
.more::after { content: ""; position: absolute; right: 1px; bottom: 1px; width: 3px; height: 3px; background: #c4c4c4; clip-path: polygon(100% 0, 100% 100%, 0 100%); }
.tool-colors { margin: 0 4px; padding-top: 5px; border-top: 1px solid #4a4a4a; }
.tool-colors .row { gap: 9px; margin-bottom: 6px; }
.modes { margin: 6px 1px 7px; }
.tool-end { display: flex; flex-direction: column; align-items: center; padding-right: 1px; margin-top: 8px; }
.tool-end svg:nth-child(2) { margin: 13px 0 24px; }

.doc { display: flex; flex-direction: column; flex: 1; min-width: 0; position: relative; z-index: 1; }
.doctabs { height: 29px; background: #424242; border-bottom: 1px solid #383838; }
.doctab { display: flex; align-items: center; justify-content: space-between; width: 256px; height: 28px; padding: 0 7px 0 10px; background: #535353; border-right: 1px solid #383838; font-size: 13px; white-space: nowrap; }
.stage { position: relative; display: flex; flex: 1; min-height: 0; }
.canvas { flex: 1; background: #606060; }
.vscroll { display: flex; flex-direction: column; justify-content: space-between; align-items: center; width: 17px; padding: 6px 0; background: #4b4b4b; }
.vscroll .chev, .hscroll .chev { color: #aaa; }
.artboard { position: absolute; left: 531px; top: 199px; width: 564px; height: 564px; background: #000; }

.status { display: flex; height: 16px; padding-left: 4px; font-size: 11px; line-height: 15px; border-top: 1px solid #4a4a4a; }
.sel { display: flex; align-items: center; background: #454545; }
.sel select { padding-left: 3px; border-right: 1px solid #5c5c5c; height: 15px; }
.sel .chev { margin-left: 4px; }
.zoom { width: 68px; }
.zoom select { width: 51px; }
.board { width: 58px; }
.board select { width: 41px; }
.nav { display: flex; align-items: center; justify-content: center; gap: 9px; width: 41px; fill: #7a7a7a; }
.mode { width: 202px; margin-left: 1px; border: solid #4a4a4a; border-width: 0 2px; text-align: center; color: #c8c8c8; }
.play { display: grid; place-items: center; width: 18px; }
.hscroll { display: flex; align-items: center; justify-content: space-between; flex: 1; padding: 0 4px; background: #4b4b4b; }
.hscroll i { width: 26px; height: 14px; border-radius: 7px; background: #636363; }
.corner { width: 17px; }

/* tabs shared by every panel */
.tabs { display: flex; height: 27px; background: #424242; border-bottom: 1px solid #383838; white-space: nowrap; }
.tabs button { display: flex; align-items: center; gap: 6px; height: 27px; padding: 0 9px 2px; border-right: 1px solid #383838; color: #a4a4a4; line-height: 24px; }
.tabs .on { background: #535353; color: #f0f0f0; padding: 0 8px 2px 4px; }
.tabs-end { display: flex; align-items: center; margin-left: auto; padding-right: 7px; }

/* floating align panel */
.align { position: absolute; right: 0; top: 285px; width: 231px; height: 211px; background: #535353; border: 1px solid #383838; border-top-width: 4px; box-shadow: 0 0 4px #0004; }
.align .tabs { font-size: 12px; }
.align .tabs button { padding: 0 8px 1px; }
.align .tabs .clip { padding: 0 2px 1px 10px; }
.align .tabs .on { padding: 0 8px 1px 4px; }
.align .tabs-end { gap: 6px; padding-right: 5px; color: #ccc; }
.tabs-end i { width: 1px; height: 11px; background: #aaa; }
.align h3 { font-size: 11px; font-weight: 500; line-height: 16px; color: #d0d0d0; white-space: nowrap; }
.align svg { fill: #c4c4c4; }
.group { height: 60px; margin: 0 5px; padding-top: 7px; border-bottom: 2px solid #4a4a4a; }
.six { display: grid; grid-template-columns: 36px 36px 50px 36px 36px 18px; margin-top: 9px; padding-left: 4px; }
.six svg, .spacing-row button svg { width: 18px; height: 18px; }
.last { display: flex; padding: 7px 5px 0; }
.spacing { width: 157px; height: 49px; border-right: 2px solid #4a4a4a; }
.spacing-row { display: flex; gap: 13px; margin-top: 7px; padding-left: 4px; align-items: center; }
.px { display: flex; width: 76px; height: 21px; background: #585858; margin-left: -3px; }
.px input { width: 58px; padding-left: 4px; color: #7c7c7c; font-size: 11px; border-left: 1px solid #535353; }
.px .step { background: none; height: 21px; }
.px .chev { color: #7c7c7c; }
.target { flex: 1; text-align: right; }
.target button { margin: 10px 15px 0 0; }

/* call-outs */
.note { position: absolute; height: 52px; border-radius: 12px; background: #fff; color: #000; font: bold 36px/54px Roboto, sans-serif; text-align: center; white-space: nowrap; box-shadow: 0 1px 4px #0009; }
.note.small { height: 43px; font-size: 30px; line-height: 42px; border-radius: 10px; }
.pin { position: absolute; display: grid; place-items: center; width: 96px; height: 96px; filter: drop-shadow(0 1px 2px #0009); }
.pin svg { grid-area: 1 / 1; width: 96px; height: 96px; }
.pin b { grid-area: 1 / 1; position: relative; color: #fff; font: 900 40px/50px Roboto, sans-serif; -webkit-text-stroke: 1px #fff; }
.north svg { transform: rotate(90deg); }
.east svg { transform: rotate(180deg); }
.down svg { transform: rotate(-90deg); }
.click { left: 155px; top: 119px; width: 269px; }
.p2 { left: 241px; top: 156px; }
.size { left: 58px; top: 302px; width: 451px; }
.rect { left: 73px; top: 180px; width: 336px; }
.p1 { left: -9px; top: 158px; }
.shift { right: -18px; top: 220px; width: 272px; }
.p4 { right: 180px; top: 309px; }
.p5 { right: -44px; top: 309px; }
.p3 { right: -12px; top: 480px; }
.toart { right: -117px; top: 561px; width: 308px; }

/* right side */
.side { display: flex; flex-direction: column; width: 293px; border-left: 2px solid #3b3b3b; }
.side .strip { padding: 0 6px 0 24px; }
.side-body { display: flex; flex: 1; min-height: 0; }
.dock { width: 40px; border-right: 3px solid #3b3b3b; }
.dgroup { display: flex; flex-direction: column; padding: 3px 0; border-bottom: 1px solid #383838; }
.dgroup .grip { margin: 0 0 2px 9px; }
.dgroup button { display: grid; place-items: center; width: 28px; height: 24px; margin: 2px 0 2px 5px; border-radius: 3px; }
.dgroup button svg { width: 18px; height: 18px; }
.dgroup .on { background: #383838; border: 1px solid #616161; }
.panels { display: flex; flex-direction: column; flex: 1; min-width: 0; }
.color { height: 196px; border-bottom: 2px solid #3b3b3b; }
.mixer { display: flex; padding: 6px 0 0 5px; }
.mix-sw { width: 48px; }
.mix-sw .row { gap: 9px; margin-bottom: 6px; }
.sliders { display: grid; gap: 12px; padding-top: 2px; }
.slide { display: flex; align-items: center; height: 21px; }
.slide label { width: 13px; padding-top: 2px; font-size: 10px; font-weight: 600; color: #c0c0c0; }
.slide input[type=text], .hexrow input { height: 21px; padding: 0 0 4px 5px; border: 1px solid #636363; border-radius: 3px; background: #454545; font-size: 11px; }
.slide input[type=text] { width: 36px; margin-left: 4px; }
input[type=range] { appearance: none; width: 110px; height: 14px; margin-top: 6px; }
input[type=range]::-webkit-slider-runnable-track { height: 13px; background: linear-gradient(90deg, #000, var(--end)) no-repeat center 1px / calc(100% - 9px) 4px; }
input[type=range]::-webkit-slider-thumb { appearance: none; width: 9px; height: 8px; margin-top: 5px; background: #c4c4c4; clip-path: polygon(50% 0, 100% 45%, 100% 100%, 0 100%, 0 45%); }
.r { --end: #f00; }
.g { --end: #0f0; }
.b { --end: #00f; }
.hexrow { display: flex; align-items: center; margin: 16px 17px 6px 5px; }
.hexrow label { margin: 0 3px 0 auto; font-size: 12px; }
.hexrow input { width: 65px; }
.spectrum { height: 23px; margin: 0 17px 0 6px; border: 1px solid #333; background: linear-gradient(#fff, #fff0 50%, #0000 50%, #000), linear-gradient(90deg, #f00, #ff0 17%, #0f0 33%, #0ff 50%, #00f 67%, #f0f 83%, #f00); }
.layers { display: flex; flex-direction: column; flex: 1; min-height: 0; padding-top: 1px; }
.layers .on { padding: 0 9px 2px; }
.list { flex: 1; margin: 6px 6px 0 5px; border: 1px solid #616161; border-radius: 2px; font-size: 11px; }
.layer { position: relative; display: flex; align-items: center; height: 21px; border-bottom: 1px solid #616161; font-weight: 600; }
.cur { background: #50667c; }
.cur::after { content: ""; position: absolute; right: 0; top: 0; width: 6px; height: 6px; background: #ddd; clip-path: polygon(0 0, 100% 0, 100% 100%); }
.c { display: grid; place-items: center; width: 21px; height: 20px; border-right: 1px solid #464f58; }
.kid .c { border-color: #616161; }
.bar { width: 3px; height: 18px; margin-left: 1px; background: #4f80ff; }
.cur .chev { margin: 0 10px 0 8px; }
.thumb { width: 18px; height: 18px; background: #000; }
.kid .thumb { margin-left: 49px; }
.name { margin-left: 5px; line-height: 18px; }
.tgt { display: grid; place-items: center; width: 20px; height: 20px; margin-left: auto; margin-right: 15px; border-left: 1px solid #616161; }
.lfoot { display: flex; align-items: center; justify-content: space-between; height: 19px; padding: 0 28px 0 5px; font-size: 11px; }
.lbtns { display: flex; gap: 13px; align-items: center; }
.taskline { height: 2px; background: #222; }
.taskline i { width: 49px; height: 2px; margin-left: 245px; background: #4b4b4b; }
```
